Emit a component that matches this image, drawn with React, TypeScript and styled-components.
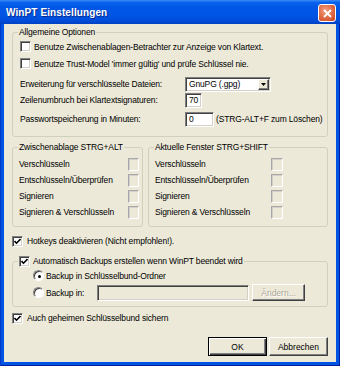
import React from "react";
import styled, { createGlobalStyle } from "styled-components";

const GlobalStyle = createGlobalStyle`
  html, body {
    margin: 0;
    padding: 0;
    background: #0054e3;
  }
  body {
    font-family: "Liberation Sans", Arial, sans-serif;
    font-size: 8.5px;
    letter-spacing: -0.15px;
    color: #000;
  }
`;

const Window = styled.div`
  width: 340px;
  height: 366px;
  display: flex;
  flex-direction: column;
`;

const TitleBar = styled.div`
  height: 24px;
  flex: none;
  display: flex;
  align-items: center;
  justify-content: space-between;
  padding: 0 4px 0 6px;
  background: linear-gradient(
    to bottom,
    #3b8cf6 0%,
    #0a62ec 10%,
    #0057e7 30%,
    #0054e3 65%,
    #004bd6 90%,
    #0040c0 100%
  );
`;

const Title = styled.span`
  color: #fff;
  font-weight: bold;
  font-size: 10px;
  letter-spacing: 0.1px;
  text-shadow: 1px 1px 0 #0c2a8a;
`;

const CloseButton = styled.div`
  width: 16px;
  height: 16px;
  margin-top: 2px;
  border: 1px solid #fff;
  border-radius: 3px;
  display: flex;
  align-items: center;
  justify-content: center;
  background: radial-gradient(circle at 40% 35%, #f3a084 0%, #e2714c 45%, #c7441f 100%);
`;

const Frame = styled.div`
  flex: 1;
  display: flex;
  padding: 0 4px 4px;
  background: #0054e3;
  box-shadow: inset 1px 0 #0838c8, inset -1px 0 #00209e, inset 0 -1px #00209e;
`;

const Body = styled.div`
  flex: 1;
  display: flex;
  flex-direction: column;
  background: #ece9d8;
  padding: 2px 8px 6px;
`;

const Group = styled.fieldset`
  margin: 0;
  padding: 0;
  min-width: 0;
  border: 1px solid #d0d0bf;
  border-radius: 3px;
`;

const Legend = styled.legend<{ $ml?: number; $h?: number }>`
  margin-left: ${(p) => p.$ml ?? 5}px;
  padding: 0 1px;
  line-height: ${(p) => p.$h ?? 12}px;
  height: ${(p) => p.$h ?? 12}px;
  display: flex;
  align-items: center;
  gap: 3px;
`;

const GroupContent = styled.div<{ $pad: string }>`
  padding: ${(p) => p.$pad};
  display: flex;
  flex-direction: column;
`;

const Row = styled.div<{ $h?: number; $mt?: number; $gap?: number }>`
  display: flex;
  align-items: center;
  height: ${(p) => p.$h ?? 16}px;
  margin-top: ${(p) => p.$mt ?? 0}px;
  gap: ${(p) => p.$gap ?? 0}px;
  white-space: nowrap;
`;

const FieldLabel = styled.span`
  width: 165px;
  flex: none;
`;

const CheckBox = styled.span`
  width: 11px;
  height: 11px;
  flex: none;
  box-sizing: border-box;
  background: #fff;
  border: 1px solid;
  border-color: #808080 #fff #fff #808080;
  box-shadow: inset 1px 1px #404040, inset -1px -1px #d4d0c8;
  display: flex;
  align-items: center;
  justify-content: center;
`;

const HotkeyBox = styled.span<{ $w: number }>`
  width: ${(p) => p.$w}px;
  height: 13px;
  box-sizing: border-box;
  border: 1px solid;
  border-color: #a7a6aa #fff #fff #a7a6aa;
  box-shadow: inset 1px 1px #d4d0c8;
`;

const Radio = styled.span`
  width: 11px;
  height: 11px;
  flex: none;
  box-sizing: border-box;
  border-radius: 50%;
  background: #fff;
  border: 1px solid;
  border-color: #808080 #fff #fff #808080;
  box-shadow: inset 1px 1px #404040;
  display: flex;
  align-items: center;
  justify-content: center;
`;

const RadioDot = styled.span`
  width: 3px;
  height: 3px;
  border-radius: 50%;
  background: #000;
  margin: 1px 0 0 1px;
`;

const Sunken = styled.div<{ $w: number; $h?: number; $bg?: string }>`
  width: ${(p) => p.$w}px;
  height: ${(p) => p.$h ?? 15}px;
  flex: none;
  box-sizing: border-box;
  background: ${(p) => p.$bg ?? "#fff"};
  border: 1px solid;
  border-color: #808080 #fff #fff #808080;
  box-shadow: inset 1px 1px #404040, inset -1px -1px #d4d0c8;
  display: flex;
  align-items: center;
  padding-left: 3px;
`;

const ComboText = styled.span`
  flex: 1;
`;

const ComboArrow = styled.span`
  width: 11px;
  height: 11px;
  margin-right: 1px;
  box-sizing: border-box;
  background: #ece9d8;
  border: 1px solid;
  border-color: #fff #404040 #404040 #fff;
  box-shadow: inset -1px -1px #808080;
  display: flex;
  align-items: center;
  justify-content: center;
`;

const Hint = styled.span`
  margin-left: 2px;
`;

const HotkeyGrid = styled.div<{ $label: number }>`
  display: grid;
  grid-template-columns: ${(p) => p.$label}px auto;
  grid-auto-rows: 16px;
  align-items: center;
  justify-items: start;
  white-space: nowrap;
`;

const TwoGroups = styled.div`
  display: grid;
  grid-template-columns: 131px 180px;
  column-gap: 5px;
  margin-top: 4px;
`;

const BackupGroup = styled(Group)`
  margin-top: 6px;
`;

const RadioLabel = styled.span<{ $w?: number }>`
  margin-left: 2px;
  width: ${(p) => (p.$w ? `${p.$w}px` : "auto")};
`;

const Button = styled.button<{ $default?: boolean; $w: number; $h?: number; $ml?: number }>`
  width: ${(p) => p.$w}px;
  height: ${(p) => p.$h ?? 19}px;
  margin-left: ${(p) => p.$ml ?? 0}px;
  padding: 0;
  font: inherit;
  color: #000;
  background: #ece9d8;
  box-sizing: border-box;
  border: 1px solid;
  border-color: ${(p) => (p.$default ? "#000" : "#fff #404040 #404040 #fff")};
  box-shadow: ${(p) =>
    p.$default
      ? "inset 1px 1px #fff, inset -1px -1px #404040, inset -2px -2px #808080"
      : "inset -1px -1px #808080"};
  &:disabled {
    color: #aca899;
    text-shadow: 1px 1px 0 #fff;
  }
`;

const ButtonRow = styled.div`
  display: flex;
  justify-content: flex-end;
  gap: 2px;
  margin-top: 11px;
`;

const Check = ({ checked }: { checked?: boolean }) => (
  <CheckBox>
    {checked && (
      <svg width="7" height="7" viewBox="0 0 7 7">
        <path d="M0.5 3 L2.5 5.2 L6.5 1" fill="none" stroke="#000" strokeWidth="1.6" />
      </svg>
    )}
  </CheckBox>
);

const hotkeyItems = [
  "Verschlüsseln",
  "Entschlüsseln/Überprüfen",
  "Signieren",
  "Signieren & Verschlüsseln",
];

export default function App() {
  return (
    <>
      <GlobalStyle />
      <Window>
        <TitleBar>
          <Title>WinPT Einstellungen</Title>
          <CloseButton>
            <svg width="9" height="9" viewBox="0 0 9 9">
              <path d="M1 1 L8 8 M8 1 L1 8" stroke="#fff" strokeWidth="1.8" />
            </svg>
          </CloseButton>
        </TitleBar>
        <Frame>
          <Body>
            <Group>
              <Legend>Allgemeine Optionen</Legend>
              <GroupContent $pad="0 0 9px 7px">
                <Row $h={17} $gap={3}>
                  <Check />
                  Benutze Zwischenablagen-Betrachter zur Anzeige von Klartext.
                </Row>
                <Row $h={17} $gap={3}>
                  <Check />
                  Benutze Trust-Model 'immer gültig' und prüfe Schlüssel nie.
                </Row>
                <Row $mt={4}>
                  <FieldLabel>Erweiterung für verschlüsselte Dateien:</FieldLabel>
                  <Sunken $w={86}>
                    <ComboText>GnuPG (.gpg)</ComboText>
                    <ComboArrow>
                      <svg width="5" height="3" viewBox="0 0 5 3">
                        <path d="M0 0 H5 L2.5 3 Z" fill="#000" />
                      </svg>
                    </ComboArrow>
                  </Sunken>
                </Row>
                <Row>
                  <FieldLabel>Zeilenumbruch bei Klartextsignaturen:</FieldLabel>
                  <Sunken $w={17}>70</Sunken>
                </Row>
                <Row $mt={3}>
                  <FieldLabel>Passwortspeicherung in Minuten:</FieldLabel>
                  <Sunken $w={29}>0</Sunken>
                  <Hint>(STRG-ALT+F zum Löschen)</Hint>
                </Row>
              </GroupContent>
            </Group>

            <TwoGroups>
              <Group>
                <Legend>Zwischenablage STRG+ALT</Legend>
                <GroupContent $pad="3px 0 6px 6px">
                  <HotkeyGrid $label={109}>
                    {hotkeyItems.map((t) => (
                      <React.Fragment key={t}>
                        <span>{t}</span>
                        <HotkeyBox $w={11} />
                      </React.Fragment>
                    ))}
                  </HotkeyGrid>
                </GroupContent>
              </Group>
              <Group>
                <Legend>Aktuelle Fenster STRG+SHIFT</Legend>
                <GroupContent $pad="3px 0 6px 6px">
                  <HotkeyGrid $label={116}>
                    {hotkeyItems.map((t) => (
                      <React.Fragment key={t}>
                        <span>{t}</span>
                        <HotkeyBox $w={12} />
                      </React.Fragment>
                    ))}
                  </HotkeyGrid>
                </GroupContent>
              </Group>
            </TwoGroups>

            <Row $mt={6} $gap={4}>
              <Check checked />
              Hotkeys deaktivieren (Nicht empfohlen!).
            </Row>

            <BackupGroup>
              <Legend $h={13}>
                <Check checked />
                Automatisch Backups erstellen wenn WinPT beendet wird
              </Legend>
              <GroupContent $pad="0 0 5px 20px">
                <Row $h={15}>
                  <Radio>
                    <RadioDot />
                  </Radio>
                  <RadioLabel>Backup in Schlüsselbund-Ordner</RadioLabel>
                </Row>
                <Row $h={17} $mt={1}>
                  <Radio />
                  <RadioLabel $w={51}>Backup in:</RadioLabel>
                  <Sunken $w={152} $h={16} $bg="#ece9d8" />
                  <Button $w={53} $h={17} $ml={3} disabled>
                    Ändern...
                  </Button>
                </Row>
              </GroupContent>
            </BackupGroup>

            <Row $mt={3} $gap={4}>
              <Check checked />
              Auch geheimen Schlüsselbund sichern
            </Row>

            <ButtonRow>
              <Button $default $w={59}>
                OK
              </Button>
              <Button $w={59}>Abbrechen</Button>
            </ButtonRow>
          </Body>
        </Frame>
      </Window>
    </>
  );
}
